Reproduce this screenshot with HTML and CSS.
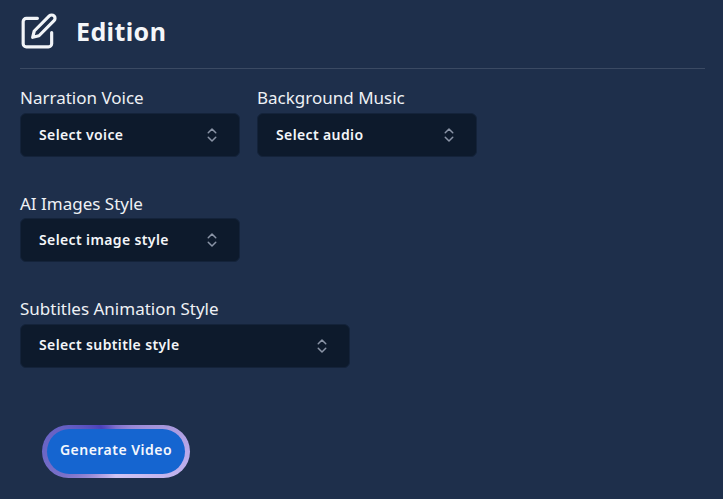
FILE: index.html
```html
<!DOCTYPE html>
<html lang="en">
<head>
<meta charset="utf-8">
<title>Edition</title>
<link rel="stylesheet" href="styles.css">
</head>
<body>
<header class="head">
  <svg class="head-icon" viewBox="0 0 24 24" fill="none" stroke="currentColor" stroke-width="2" stroke-linecap="round" stroke-linejoin="round"><path d="M11 4H4a2 2 0 0 0-2 2v14a2 2 0 0 0 2 2h14a2 2 0 0 0 2-2v-7"/><path d="M18.5 2.5a2.121 2.121 0 0 1 3 3L12 15l-4 1 1-4 9.5-9.5z"/></svg>
  <h1 class="title">Edition</h1>
</header>
<div class="rule"></div>
<div class="row row-first">
  <div class="field">
    <label class="label">Narration Voice</label>
    <div class="select w-sm"><span>Select voice</span><svg class="chev" viewBox="0 0 24 24" fill="none" stroke="currentColor" stroke-width="2" stroke-linecap="round" stroke-linejoin="round"><path d="m7 15 5 5 5-5"/><path d="m7 9 5-5 5 5"/></svg></div>
  </div>
  <div class="field">
    <label class="label">Background Music</label>
    <div class="select w-sm"><span>Select audio</span><svg class="chev" viewBox="0 0 24 24" fill="none" stroke="currentColor" stroke-width="2" stroke-linecap="round" stroke-linejoin="round"><path d="m7 15 5 5 5-5"/><path d="m7 9 5-5 5 5"/></svg></div>
  </div>
</div>
<div class="row">
  <div class="field">
    <label class="label">AI Images Style</label>
    <div class="select w-sm"><span>Select image style</span><svg class="chev" viewBox="0 0 24 24" fill="none" stroke="currentColor" stroke-width="2" stroke-linecap="round" stroke-linejoin="round"><path d="m7 15 5 5 5-5"/><path d="m7 9 5-5 5 5"/></svg></div>
  </div>
</div>
<div class="row">
  <div class="field">
    <label class="label">Subtitles Animation Style</label>
    <div class="select w-lg"><span>Select subtitle style</span><svg class="chev" viewBox="0 0 24 24" fill="none" stroke="currentColor" stroke-width="2" stroke-linecap="round" stroke-linejoin="round"><path d="m7 15 5 5 5-5"/><path d="m7 9 5-5 5 5"/></svg></div>
  </div>
</div>
<div class="actions">
  <button class="generate"><span class="generate-inner">Generate Video</span></button>
</div>
</body>
</html>
```
FILE: styles.css
```css
* { box-sizing: border-box; }
html, body { height: 100%; }
body {
  margin: 0;
  padding: 12px 18px 0 20px;
  background: #1e2f4b;
  color: #f4f6f9;
  font-family: "Noto Sans", "Open Sans", sans-serif;
  overflow: hidden;
}
.head { display: flex; align-items: center; gap: 18px; height: 38px; }
.head-icon { width: 38px; height: 38px; color: #f1f4f8; flex: none; }
.title { margin: 0 0 1px; font-size: 25px; line-height: 32px; font-weight: 700; letter-spacing: 0.4px; }
.rule { height: 1px; background: #3b4a63; margin-top: 18px; }
.row { display: flex; gap: 17px; margin-top: 35.4px; }
.row-first { margin-top: 18px; }
.field { display: flex; flex-direction: column; }
.label { font-size: 17px; line-height: 24px; margin-top: -0.6px; margin-bottom: 2.6px; color: #eef1f5; }
.select {
  height: 44px;
  display: flex;
  align-items: center;
  justify-content: space-between;
  padding: 0 18px;
  background: #0d1a2c;
  border: 1px solid #14233a;
  border-radius: 6px;
  font-size: 14px;
  line-height: 20px;
  font-weight: 600;
  letter-spacing: 0.38px;
}
.select span { margin-top: -1px; }
.w-sm { width: 220px; }
.w-lg { width: 330px; }
.chev { width: 18px; height: 18px; color: #8a94a6; flex: none; }
.actions { margin-top: 57px; padding-left: 22px; }
.generate {
  display: block;
  width: 148px;
  height: 53px;
  padding: 4px 5px;
  border: 0;
  border-radius: 27px;
  background: conic-gradient(from 0deg at 50% 50%, #7f70cc 0deg, #9585d5 29deg, #a596dc 63deg, #b9a9ea 90deg, #cbbdf0 135deg, #d0c4f3 180deg, #b0a0e0 212deg, #7a70c8 246deg, #6b66c6 270deg, #6660c4 294deg, #4b41b9 328deg, #7f70cc 360deg);
  font-family: inherit;
}
.generate-inner {
  display: flex;
  align-items: center;
  justify-content: center;
  height: 100%;
  border-radius: 23px;
  background: #1565d0;
  color: #f5f8fd;
  font-size: 14px;
  line-height: 20px;
  font-weight: 600;
  letter-spacing: 0.48px;
  padding-bottom: 2px;
}
```
